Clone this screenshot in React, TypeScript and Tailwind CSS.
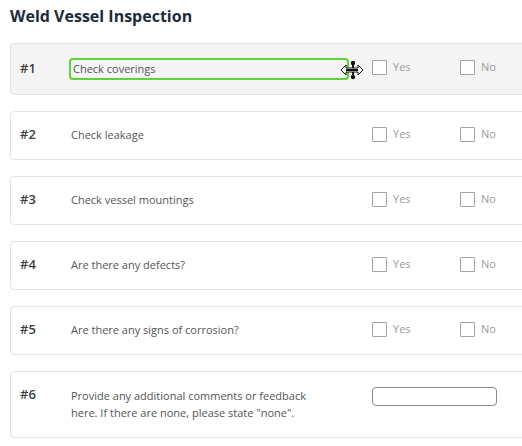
import React from 'react';

interface Item {
  id: number;
  label: string;
  kind: 'check' | 'text';
  active?: boolean;
}

const items: Item[] = [
  { id: 1, label: 'Check coverings', kind: 'check', active: true },
  { id: 2, label: 'Check leakage', kind: 'check' },
  { id: 3, label: 'Check vessel mountings', kind: 'check' },
  { id: 4, label: 'Are there any defects?', kind: 'check' },
  { id: 5, label: 'Are there any signs of corrosion?', kind: 'check' },
  { id: 6, label: 'Provide any additional comments or feedback here. If there are none, please state "none".', kind: 'text' },
];

function Box({ label }: { label: string }) {
  return (
    <div className="flex items-center gap-[6px]">
      <span className="block w-[15px] h-[15px] border border-[#a3a3a3] rounded-[1px] bg-white" />
      <span className="text-[11px] text-[#9a9a9a]">{label}</span>
    </div>
  );
}

function ResizeCursor() {
  return (
    <svg width="24" height="20" viewBox="0 0 24 20" className="absolute left-[329px] top-[16px]">
      <circle cx="13" cy="3" r="2.2" fill="#111" />
      <circle cx="13" cy="17" r="2.2" fill="#111" />
      <rect x="12" y="4" width="2" height="12" fill="#111" />
      <path d="M1 10 L6 5 L6 8 L18 8 L18 5 L23 10 L18 15 L18 12 L6 12 L6 15 Z" fill="#fff" stroke="#111" strokeWidth="1" strokeLinejoin="round" />
      <rect x="6" y="9" width="12" height="2" fill="#111" />
    </svg>
  );
}

export default function App() {
  return (
    <div className="w-[522px] h-[446px] overflow-hidden bg-white" style={{ fontFamily: '"Open Sans", "Noto Sans", sans-serif' }}>
      <h1 className="pl-[10px] pt-[5px] text-[16px] leading-[22px] font-bold text-[#1e2b3a]">Weld Vessel Inspection</h1>
      <div className="pl-[10px] pt-[16px] flex flex-col gap-[16px] w-[540px]">
        {items.map((item) => (
          <div
            key={item.id}
            className={`relative flex items-start border border-[#e2e2e2] rounded-[4px] ${
              item.active ? 'bg-[#f4f4f4] h-[52px]' : item.kind === 'text' ? 'bg-white h-[67px]' : 'bg-white h-[49px]'
            }`}
          >
            <div className={`w-[60px] shrink-0 pl-[9px] text-[13px] font-semibold text-[#3d3d3d] ${item.active ? 'pt-[15px]' : 'pt-[13px]'}`}>
              #{item.id}
            </div>
            {item.kind === 'check' ? (
              <>
                <div className={`w-[301px] shrink-0 ${item.active ? 'pt-[14px]' : 'pt-[14px]'}`}>
                  {item.active ? (
                    <div className="w-[280px] h-[22px] -ml-[2px] border-2 border-[#5fd33a] rounded-[4px] bg-[#f4f4f4] flex items-center pl-[2px] text-[11px] text-[#555]">
                      {item.label}
                    </div>
                  ) : (
                    <div className="text-[11px] leading-[18px] text-[#555]">{item.label}</div>
                  )}
                </div>
                <div className={`flex ${item.active ? 'pt-[15px]' : 'pt-[14px]'}`}>
                  <div className="w-[88px]">
                    <Box label="Yes" />
                  </div>
                  <Box label="No" />
                </div>
                {item.active && <ResizeCursor />}
              </>
            ) : (
              <>
                <div className="w-[301px] shrink-0 pt-[15px] pr-[40px] text-[11px] leading-[17px] text-[#555]">
                  {item.label}
                </div>
                <div className="pt-[15px]">
                  <div className="w-[125px] h-[19px] border border-[#8a8a8a] rounded-[4px] bg-white" />
                </div>
              </>
            )}
          </div>
        ))}
      </div>
    </div>
  );
}
